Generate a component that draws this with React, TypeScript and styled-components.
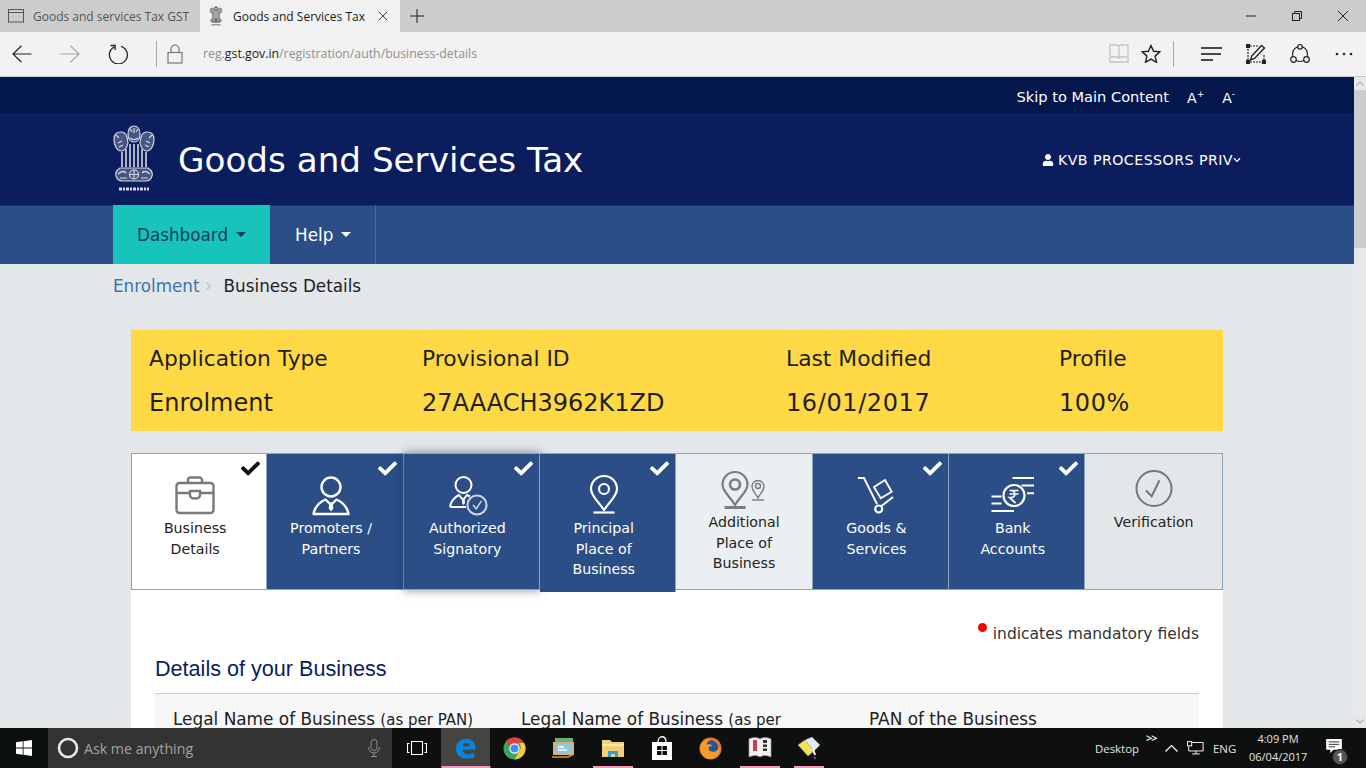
import React from 'react';
import styled, { createGlobalStyle } from 'styled-components';
import { FaCheck, FaUser, FaChevronDown } from 'react-icons/fa';

const GlobalStyle = createGlobalStyle`
  html, body {
    margin: 0;
    padding: 0;
    overflow: hidden;
    background: #000;
  }
  * {
    box-sizing: border-box;
  }
`;

const Screen = styled.div`
  width: 1366px;
  height: 768px;
  display: flex;
  flex-direction: column;
  overflow: hidden;
  font-family: 'DejaVu Sans', Verdana, sans-serif;
`;

/* browser chrome */
const TabStrip = styled.div`
  height: 32px;
  flex: none;
  display: flex;
  align-items: stretch;
  background: #cccccc;
  font-family: 'Open Sans', 'Noto Sans', sans-serif;
  font-size: 12px;
`;
const BrowserTab = styled.div<{ $active?: boolean }>`
  width: 200px;
  display: flex;
  align-items: center;
  gap: 9px;
  padding-left: 8px;
  color: ${(p) => (p.$active ? '#1a1a1a' : '#555')};
  background: ${(p) => (p.$active ? '#f2f2f2' : '#cccccc')};
  white-space: nowrap;
`;
const TabClose = styled.span`
  margin-left: 3px;
  display: flex;
`;
const NewTab = styled.div`
  width: 34px;
  display: flex;
  align-items: center;
  justify-content: center;
`;
const WindowControls = styled.div`
  margin-left: auto;
  display: flex;
`;
const WindowButton = styled.div`
  width: 46px;
  display: flex;
  align-items: center;
  justify-content: center;
`;
const AddressBar = styled.div`
  height: 45px;
  flex: none;
  display: flex;
  align-items: center;
  background: #f2f2f2;
  border-bottom: 1px solid #c9c9c9;
  padding-bottom: 1px;
`;
const ToolSlot = styled.div<{ $w: number }>`
  width: ${(p) => p.$w}px;
  height: 32px;
  flex: none;
  display: flex;
  align-items: center;
  justify-content: center;
`;
const ToolDivider = styled.div<{ $ml: number; $mr?: number }>`
  width: 1px;
  height: 26px;
  flex: none;
  background: #a9a9a9;
  margin-left: ${(p) => p.$ml}px;
  margin-right: ${(p) => p.$mr ?? 0}px;
`;
const Url = styled.div`
  margin-left: 10px;
  flex: 1;
  font-family: 'Open Sans', 'Noto Sans', sans-serif;
  font-size: 12.3px;
  color: #8e8e8e;
  b {
    font-weight: 400;
    color: #1c1c1c;
  }
`;

/* page */
const Viewport = styled.div`
  flex: 1;
  min-height: 0;
  display: flex;
  overflow: hidden;
`;
const Page = styled.div`
  flex: 1;
  min-width: 0;
  background: #e4e7ea;
  overflow: hidden;
`;
const Scrollbar = styled.div`
  width: 12px;
  flex: none;
  display: flex;
  flex-direction: column;
  align-items: stretch;
  background: #e8e8e8;
`;
const ScrollArrow = styled.div`
  height: 13px;
  display: flex;
  align-items: center;
  justify-content: center;
`;
const ScrollThumb = styled.div`
  height: 158px;
  background: #cdcdcd;
`;
const ScrollTrack = styled.div`
  flex: 1;
  display: flex;
  flex-direction: column;
`;
const TopBar = styled.div`
  height: 36px;
  background: #04174d;
  display: flex;
  align-items: center;
  justify-content: flex-end;
  padding: 2px 119px 0 0;
  color: #fff;
  font-size: 14.6px;
`;
const FontSizer = styled.span`
  margin: 3px 0 0 18px;
  font-size: 14px;
  sup {
    font-size: 9px;
    line-height: 0;
  }
`;
const Header = styled.div`
  height: 92px;
  background: #0b1d5c;
`;
const Container = styled.div`
  width: 1128px;
  margin: 0 auto;
`;
const HeaderInner = styled(Container)`
  height: 100%;
  display: flex;
  align-items: center;
  color: #fff;
`;
const EmblemSlot = styled.div`
  width: 65px;
  flex: none;
  display: flex;
  color: #d5d8e2;
`;
const SiteTitle = styled.h1`
  margin: 0;
  padding-top: 2px;
  flex: 1;
  font-size: 34.2px;
  font-weight: 400;
  line-height: 1;
  white-space: nowrap;
`;
const UserMenu = styled.div`
  display: flex;
  align-items: center;
  padding-top: 2px;
  font-size: 14.2px;
  letter-spacing: 0.45px;
  white-space: nowrap;
  svg:first-child {
    margin-right: 4px;
  }
`;
const NavBar = styled.div`
  height: 59px;
  background: #2c4e86;
  box-shadow: inset 0 1px 0 #1b3168;
`;
const NavInner = styled(Container)`
  height: 100%;
  display: flex;
`;
const NavItem = styled.div<{ $active?: boolean }>`
  display: flex;
  align-items: center;
  gap: 8px;
  padding: 0 24px;
  font-size: 16.8px;
  color: ${(p) => (p.$active ? '#0d3b5e' : '#fff')};
  background: ${(p) => (p.$active ? '#17c4bb' : 'transparent')};
  border-right: 1px solid ${(p) => (p.$active ? '#2c4e86' : '#48689a')};
`;
const Caret = styled.span`
  width: 0;
  height: 0;
  border-left: 5px solid transparent;
  border-right: 5px solid transparent;
  border-top: 5px solid currentColor;
`;
const Breadcrumb = styled.div`
  height: 66px;
  padding-top: 11px;
  display: flex;
  font-size: 16.8px;
  line-height: 22px;
  color: #222;
`;
const CrumbLink = styled.span`
  color: #3b74ad;
`;
const CrumbSep = styled.span`
  width: 24px;
  padding-left: 5px;
  color: #c6c6c6;
  font-size: 20px;
  line-height: 20px;
`;
const Content = styled.div`
  padding: 0 18px;
`;
const SummaryPanel = styled.div`
  display: grid;
  grid-template-columns: 3fr 4fr 3fr 2fr;
  height: 101px;
  padding-top: 7px;
  background: #ffd945;
  color: #1f1f1f;
  font-size: 21.8px;
  line-height: 44px;
`;
const SummaryCol = styled.div`
  padding-left: 18px;
  white-space: nowrap;
`;
const SummaryValue = styled.div<{ $spaced?: boolean }>`
  font-size: 24px;
  letter-spacing: ${(p) => (p.$spaced ? '0.6px' : '0')};
`;
const Steps = styled.div`
  margin-top: 22px;
  display: grid;
  grid-template-columns: repeat(7, 136.35px) 1fr;
  height: 137px;
`;
const Step = styled.div<{ $kind: 'current' | 'done' | 'additional' | 'pending'; $lifted?: boolean; $tall?: boolean }>`
  position: relative;
  display: flex;
  flex-direction: column;
  align-items: center;
  text-align: center;
  font-size: 14.2px;
  line-height: 20.5px;
  padding: ${(p) => (p.$kind === 'done' || p.$kind === 'current' ? '20px 8px 0 0' : '14px 0 0 0')};
  background: ${(p) =>
    p.$kind === 'current' ? '#fff' : p.$kind === 'done' ? '#2c4e86' : p.$kind === 'additional' ? '#eaeff2' : '#e4e7ea'};
  color: ${(p) => (p.$kind === 'done' ? '#fff' : '#222')};
  border: 1px solid #8aa5ba;
  border-left: 0;
  border-bottom: ${(p) => (p.$tall ? '0' : '1px solid #8aa5ba')};
  margin-bottom: ${(p) => (p.$tall ? '-2px' : '0')};
  z-index: ${(p) => (p.$lifted || p.$tall ? 1 : 0)};
  box-shadow: ${(p) => (p.$lifted ? '0 0 9px rgba(20, 40, 80, 0.55)' : 'none')};
  &:first-child {
    border-left: 1px solid #8aa5ba;
  }
`;
const StepTick = styled.span<{ $dark?: boolean }>`
  position: absolute;
  top: 5px;
  right: 6px;
  display: flex;
  color: ${(p) => (p.$dark ? '#111' : '#fff')};
`;
const StepIcon = styled.div`
  height: 44px;
  display: flex;
`;
const Card = styled.div`
  background: #fff;
  padding: 32px 24px 0;
`;
const MandatoryNote = styled.div`
  display: flex;
  justify-content: flex-end;
  font-size: 15.5px;
  line-height: 24px;
  color: #333;
`;
const RedDot = styled.span`
  width: 9px;
  height: 9px;
  margin: 1px 6px 0 0;
  border-radius: 50%;
  background: #f00;
`;
const SectionTitle = styled.h2`
  margin: 8px 0 0;
  padding-bottom: 9px;
  border-bottom: 1px solid #ccc;
  font-family: 'Liberation Sans', Arial, sans-serif;
  font-size: 21.6px;
  font-weight: 400;
  line-height: 30px;
  color: #0b1d5c;
`;
const FieldRow = styled.div`
  display: grid;
  grid-template-columns: repeat(3, 1fr);
  background: #f7f7f7;
  padding-top: 13px;
  height: 60px;
`;
const FieldLabel = styled.div`
  padding-left: 18px;
  font-size: 16.9px;
  line-height: 24px;
  color: #222;
  small {
    font-size: 15px;
  }
`;

/* windows taskbar */
const Taskbar = styled.div`
  height: 40px;
  flex: none;
  display: flex;
  align-items: stretch;
  background: #0e0f0f;
  color: #fff;
  font-family: 'Open Sans', 'Noto Sans', sans-serif;
`;
const StartButton = styled.div`
  width: 48px;
  display: flex;
  align-items: center;
  justify-content: center;
  background: #0a100d;
`;
const SearchBox = styled.div`
  width: 344px;
  display: flex;
  align-items: center;
  padding: 0 12px 0 9px;
  background: #333;
  color: #a2a2a2;
  font-size: 14.2px;
`;
const SearchText = styled.span`
  margin-left: 5px;
  flex: 1;
`;
const TaskSlot = styled.div<{ $w?: number; $active?: boolean; $bar?: number }>`
  position: relative;
  width: ${(p) => p.$w ?? 49}px;
  flex: none;
  display: flex;
  align-items: center;
  justify-content: center;
  background: ${(p) => (p.$active ? '#45443f' : 'transparent')};
  &::after {
    content: '';
    display: ${(p) => (p.$bar ? 'block' : 'none')};
    position: absolute;
    bottom: 0;
    left: 50%;
    width: ${(p) => p.$bar}px;
    height: 2px;
    transform: translateX(-50%);
    background: #f29ac2;
  }
`;
const Tray = styled.div`
  margin-left: auto;
  display: flex;
  align-items: center;
  font-size: 11.4px;
  color: #e4e4e4;
`;
const DesktopLabel = styled.span`
  width: 51px;
`;
const Overflow = styled.span`
  width: 13px;
  align-self: flex-start;
  margin-top: 1px;
  font-size: 11px;
  font-weight: 700;
  line-height: 18px;
  letter-spacing: -1px;
`;
const TrayIcon = styled.div<{ $w: number }>`
  width: ${(p) => p.$w}px;
  display: flex;
  justify-content: center;
`;
const Lang = styled.span`
  width: 42px;
  padding-left: 6px;
`;
const Clock = styled.div`
  width: 58px;
  text-align: center;
  font-size: 11px;
  line-height: 18.5px;
`;
const NotifySlot = styled.div`
  position: relative;
  width: 59px;
  height: 100%;
  padding: 0 6px 5px 0;
  display: flex;
  align-items: center;
  justify-content: center;
`;
const NotifyBadge = styled.span`
  position: absolute;
  top: 21px;
  left: 25px;
  width: 16px;
  height: 16px;
  border-radius: 50%;
  background: #555;
  border: 1px solid #222;
  font-size: 11px;
  font-weight: 700;
  line-height: 14px;
  text-align: center;
  color: #fff;
`;

type LineProps = { c?: string };

const Emblem = ({ w, h }: { w: number; h: number }) => (
  <svg width={w} height={h} viewBox="0 0 42 68" fill="none" stroke="currentColor" strokeWidth="1.200">
    <path d="M15 9c0-5 2.500-8 6-8s6 3 6 8-2.500 8-6 8-6-3-6-8z" fill="currentColor" fillOpacity=".3" />
    <path d="M1 14c0-5 3-7 7-7 3 0 5 2 6 5l1 6c-1 5-4 8-7 8-4 0-7-6-7-12z" fill="currentColor" fillOpacity=".3" />
    <path d="M41 14c0-5-3-7-7-7-3 0-5 2-6 5l-1 6c1 5 4 8 7 8 4 0 7-6 7-12z" fill="currentColor" fillOpacity=".3" />
    <path d="M17 4l2 3M25 4l-2 3M21 3v5M17 13c2 2 6 2 8 0M3 10l3 3M5 18l4-2M6 22l4-2M39 10l-3 3M37 18l-4-2M36 22l-4-2" />
    <path d="M9 27v15M13 24v18M17 19v23M21 19v23M25 19v23M29 24v18M33 27v15" strokeWidth="1.600" />
    <path d="M7 43c-3 2-5 5-4 8s3 5 6 5h24c3 0 5-2 6-5s-1-6-4-8z" fill="currentColor" fillOpacity=".3" />
    <circle cx="21" cy="49.500" r="4.500" />
    <path d="M21 45v9M16.500 49.500h9M5 49c3-3 6-3 8-1M37 49c-3-3-6-3-8-1M7 53h7M28 53h7M11 46l2 2M31 46l-2 2" />
    <path d="M6 64h30" strokeWidth="3" strokeDasharray="3 1 2 1" />
  </svg>
);

const BriefcaseIcon = () => (
  <svg width="48" height="44" viewBox="0 0 48 44" fill="none" stroke="#7a7a7a" strokeWidth="2.400">
    <rect x="5.500" y="9" width="37" height="30" rx="3" />
    <path d="M17 9V6a2.500 2.500 0 0 1 2.500-2.500h9A2.500 2.500 0 0 1 31 6v3M5.500 19H19M29 19h13.500" />
    <path d="M19 17h10v4c0 2-2 3.500-5 3.500S19 23 19 21z" />
  </svg>
);
const PersonIcon = () => (
  <svg width="48" height="44" viewBox="0 0 48 44" fill="none" stroke="#fff" strokeWidth="2.400">
    <circle cx="24" cy="13" r="9.500" />
    <path d="M6.500 40C8 32 13 28 18.500 25.500L24 31l5.500-5.500C35 28 40 32 41.500 40z" strokeLinejoin="round" />
    <path d="M22.500 28.500h3l.8 6-2.300 3-2.300-3z" fill="#fff" stroke="none" />
  </svg>
);
const SignatoryIcon = () => (
  <svg width="48" height="44" viewBox="0 0 48 44" fill="none" stroke="#fff" strokeWidth="2">
    <circle cx="20.500" cy="11" r="8" />
    <path d="M7 33c1-6 5-10 9-12l4 5 4-5 3 1.500M7 33h16" strokeLinejoin="round" />
    <path d="M19.500 24h2l.5 5-1.500 2-1.500-2z" fill="#fff" stroke="none" />
    <circle cx="34" cy="31" r="9.500" stroke="#cfd6e4" fill="#2c4e86" />
    <path d="M30 31l3.200 3.800 5.300-8" strokeWidth="1.500" stroke="#cfd6e4" />
  </svg>
);
const PinIcon = () => (
  <svg width="48" height="44" viewBox="0 0 48 44" fill="none" stroke="#fff" strokeWidth="2.200">
    <path d="M24 36C18 27 11 22 11 15a13 13 0 0 1 26 0c0 7-7 12-13 21z" strokeLinejoin="round" />
    <circle cx="24" cy="15" r="5" />
    <path d="M13.500 38.500h21" />
  </svg>
);
const TwoPinsIcon = () => (
  <svg width="48" height="44" viewBox="0 0 48 44" fill="none" stroke="#7c7c7c" strokeWidth="2.200">
    <path d="M15 37C10 28 2.500 24 2.500 16.500a12.500 12.500 0 0 1 25 0C27.500 24 20 28 15 37z" strokeLinejoin="round" />
    <circle cx="15" cy="16.500" r="5" strokeWidth="2.600" />
    <path d="M4.500 39.500h21" strokeWidth="3" />
    <path d="M38 30c-2.500-5-6-7-6-11.500a6 6 0 0 1 12 0C44 23 40.500 25 38 30z" strokeWidth="1.400" />
    <circle cx="38" cy="18" r="2.500" strokeWidth="1.400" />
    <path d="M32 32h12" strokeWidth="1.400" />
  </svg>
);
const TrolleyIcon = () => (
  <svg width="48" height="44" viewBox="0 0 48 44" fill="none" stroke="#fff" strokeWidth="1.900">
    <path d="M6 4h6l13 26" />
    <circle cx="26.700" cy="35" r="3.500" strokeWidth="2.200" />
    <path d="M29.500 32L41 23" />
    <path d="M22 13l11-7 6.700 11.700-11 6.600z" />
  </svg>
);
const MoneyIcon = () => (
  <svg width="48" height="44" viewBox="0 0 48 44" fill="none" stroke="#fff" strokeWidth="2">
    <circle cx="25" cy="21.500" r="10.500" strokeWidth="2.200" />
    <path d="M23.500 4H45M32.500 11.500H45M38 19.300H45M2.500 22.500h10M2.500 29.500h10M2.500 37H25" />
    <path d="M20.500 16.500h9M20.500 20h9M22 16.500c5 0 5 7 0 7h-1.500l6 5.500" strokeWidth="1.700" />
  </svg>
);
const VerifyIcon = () => (
  <svg width="48" height="44" viewBox="0 0 48 44" fill="none" stroke="#777" strokeWidth="2">
    <circle cx="24" cy="20.500" r="17.500" />
    <path d="M16 22.500l5.700 5.700 7.800-16" />
  </svg>
);
const ArrowIcon = ({ c = '#222', flip }: LineProps & { flip?: boolean }) => (
  <svg width="20" height="18" viewBox="0 0 20 18" fill="none" stroke={c} strokeWidth="1.200" transform={flip ? 'scale(-1 1)' : undefined}>
    <path d="M19.500 9H1M9.500.7L1 9l8.500 8.300" />
  </svg>
);
const ReloadIcon = () => (
  <svg width="20" height="20" viewBox="0 0 20 20" fill="none" stroke="#222" strokeWidth="1.300">
    <path d="M6.500 2.800A9 9 0 1 0 13 2.300" />
    <path d="M2.500 1.500h4.600v4.600" />
  </svg>
);
const LockIcon = () => (
  <svg width="16" height="20" viewBox="0 0 16 20" fill="none" stroke="#777" strokeWidth="1.200">
    <rect x="1" y="8.500" width="14" height="10.500" />
    <path d="M4 8.500V5a4 4 0 0 1 8 0v3.500" />
  </svg>
);
const BookIcon = () => (
  <svg width="20" height="19" viewBox="0 0 20 19" fill="none" stroke="#c4c4c4" strokeWidth="1.300">
    <path d="M1 1h7c1 0 2 .6 2 2v12c0-1-1-2-2-2H1zM19 1h-7c-1 0-2 .6-2 2v12c0-1 1-2 2-2h7zM1 13v5h18v-5" />
  </svg>
);
const StarIcon = () => (
  <svg width="20" height="19" viewBox="0 0 20 19" fill="none" stroke="#222" strokeWidth="1.400">
    <path d="M10 1.500l2.600 5.800 6.300.6-4.800 4.200 1.400 6.200L10 15.100l-5.500 3.200 1.400-6.200L1.100 7.900l6.300-.6z" />
  </svg>
);
const HubIcon = () => (
  <svg width="21" height="14" viewBox="0 0 21 14" fill="none" stroke="#111" strokeWidth="1.400">
    <path d="M0 1h21M0 7h20M0 13h12" />
  </svg>
);
const NoteIcon = () => (
  <svg width="20" height="20" viewBox="0 0 20 20" fill="none" stroke="#222" strokeWidth="1.200">
    <path d="M4 2h8M2 5v11M4 18h12M18 11v5" strokeDasharray="2 1" />
    <rect x=".5" y=".5" width="3" height="3" fill="#222" />
    <rect x=".5" y="16.500" width="3" height="3" fill="#222" />
    <rect x="16.500" y="16.500" width="3" height="3" fill="#222" />
    <path d="M15.500 1.500l3 2.500L8.500 14.500l-4 1.500 1.200-4z" strokeWidth="1.400" />
  </svg>
);
const ShareIcon = () => (
  <svg width="20" height="20" viewBox="0 0 20 20" fill="none" stroke="#222" strokeWidth="1.200">
    <circle cx="10" cy="10" r="7.500" />
    <circle cx="10" cy="2.800" r="2.300" fill="#f2f2f2" />
    <circle cx="3.500" cy="15.500" r="2.800" fill="#f2f2f2" />
    <circle cx="16.500" cy="15.500" r="2.800" fill="#f2f2f2" />
  </svg>
);
const MoreIcon = () => (
  <svg width="18" height="4" viewBox="0 0 18 4" fill="#222">
    <circle cx="2" cy="2" r="1.300" />
    <circle cx="9" cy="2" r="1.300" />
    <circle cx="16" cy="2" r="1.300" />
  </svg>
);
const PageTabIcon = () => (
  <svg width="16" height="14" viewBox="0 0 16 14" fill="none" stroke="#555" strokeWidth="1">
    <rect x=".5" y=".5" width="15" height="12.500" />
    <path d="M.5 3.500h15" />
  </svg>
);
const Thin = ({ d, size = 14 }: { d: string; size?: number }) => (
  <svg width={size} height={size} viewBox="0 0 14 14" fill="none" stroke="#222" strokeWidth="1">
    <path d={d} />
  </svg>
);
const RestoreIcon = () => (
  <svg width="10" height="10" viewBox="0 0 10 10" fill="none" stroke="#222" strokeWidth="1">
    <rect x=".5" y="2.500" width="7" height="7" />
    <path d="M2.500 2.500v-2h7v7h-2" />
  </svg>
);
const WindowsIcon = () => (
  <svg width="16" height="16" viewBox="0 0 16 16" fill="#fff">
    <path d="M0 2.300l6.700-1v6.300H0zM7.500 1.200L16 0v7.600H7.500zM0 8.400h6.700v6.300L0 13.700zM7.500 8.400H16V16l-8.500-1.200z" />
  </svg>
);
const Cortana = () => (
  <svg width="22" height="22" viewBox="0 0 22 22" fill="none" stroke="#e8e8e8" strokeWidth="2.600" style={{ flex: 'none' }}>
    <circle cx="11" cy="11" r="9" />
  </svg>
);
const MicIcon = () => (
  <svg width="12" height="18" viewBox="0 0 12 18" fill="none" stroke="#8d8d8d" strokeWidth="1">
    <rect x="3" y=".5" width="6" height="11" rx="3" />
    <path d="M.5 8c0 8 11 8 11 0M6 14v3.500M3 17.500h6" />
  </svg>
);
const TaskViewIcon = () => (
  <svg width="20" height="14" viewBox="0 0 20 14" fill="none" stroke="#fff" strokeWidth="1.100">
    <rect x="4.500" y=".5" width="11" height="13" />
    <path d="M2.500 2.500H.5v9h2M17.500 2.500h2v9h-2" />
  </svg>
);
const EdgeIcon = () => (
  <svg width="22" height="22" viewBox="0 0 24 24" fill="#0c83d8" fillRule="evenodd">
    <path d="M1 13C1 5.500 7 1.500 13 2c6.500.5 10 5.500 9.500 12H8.500c0 5 7 6.500 12.500 3v5c-8 3.500-20 1.500-20-9zM8.500 10H16c0-4.500-7-4.500-7.500 0z" />
  </svg>
);
const ChromeIcon = () => (
  <svg width="23" height="23" viewBox="0 0 24 24">
    <circle cx="12" cy="12" r="11.500" fill="#3aa757" />
    <path d="M12 .5a11.500 11.500 0 0 1 10 5.800H12a5.700 5.700 0 0 0-5.200 3.300L3 4.200A11.500 11.500 0 0 1 12 .5z" fill="#db4437" />
    <path d="M22 6.300A11.500 11.500 0 0 1 12 23.500l4.800-8.500A5.700 5.700 0 0 0 16.500 6.300z" fill="#fcc934" />
    <circle cx="12" cy="12" r="5.400" fill="#fff" />
    <circle cx="12" cy="12" r="4.200" fill="#4a8af4" />
  </svg>
);
const MailIcon = () => (
  <svg width="24" height="22" viewBox="0 0 24 22">
    <rect x="3" y="1" width="18" height="15" fill="#69b27a" />
    <rect x="1" y="5" width="21" height="13" fill="#d8b070" />
    <rect x="3" y="7" width="17" height="10" fill="#8fc6e8" />
    <path d="M6 10h6M6 13h9" stroke="#fff" strokeWidth="1.500" />
    <path d="M0 20h16l6-3" stroke="#d89a30" strokeWidth="1.500" fill="none" />
  </svg>
);
const FolderIcon = () => (
  <svg width="22" height="19" viewBox="0 0 22 19">
    <path d="M0 1h8l2 2h12v15H0z" fill="#f3d078" />
    <path d="M0 5h22v2H0z" fill="#fbe7a8" />
    <path d="M6 18v-6h10v6h-3v-3H9v3z" fill="#3a9ad9" />
  </svg>
);
const StoreIcon = () => (
  <svg width="22" height="24" viewBox="0 0 22 24" fill="#fff">
    <path d="M1 6h20v18H1z" />
    <path d="M7 6c0-7 8-7 8 0" fill="none" stroke="#fff" strokeWidth="1.300" />
    <path d="M6 10h4.500v4H6zM11.500 10H16v4h-4.500zM6 15h4.500v4H6zM11.500 15H16v4h-4.500z" fill="#0e0f0f" />
  </svg>
);
const FirefoxIcon = () => (
  <svg width="23" height="23" viewBox="0 0 24 24">
    <circle cx="12" cy="12" r="11.500" fill="#e8762c" />
    <circle cx="12.500" cy="11" r="7.500" fill="#27549b" />
    <path d="M2 8c3-5 7-6 10-5-3 1-4 3-4 5 2-1 5 0 6 1-2 0-4 1-4 3 0 3 4 4 7 3 2-.5 4-3 4-6 2 5-1 14-10 14C5 23 0 15 2 8z" fill="#f49b2c" />
  </svg>
);
const DictionaryIcon = () => (
  <svg width="24" height="24" viewBox="0 0 24 24">
    <path d="M1 3c4-2 8-2 11 0 3-2 7-2 11 0v18c-4-2-8-2-11 0-3-2-7-2-11 0z" fill="#f2f2f2" stroke="#999" strokeWidth=".7" />
    <path d="M5 4h4v11H5z" fill="#c8414b" />
    <path d="M15 4h4v3h-4zM15 8.500h4v2.500h-4zM15 12.500h4V15h-4z" fill="#333" />
  </svg>
);
const PatchIcon = () => (
  <svg width="24" height="24" viewBox="0 0 24 24">
    <path d="M1 9l7-5 9 11-6 5z" fill="#f0e060" stroke="#aaa24a" strokeWidth=".6" />
    <path d="M8 4l7-3 8 8-6 6z" fill="#dfe9f2" />
    <path d="M16 13l2 6" stroke="#fff" strokeWidth="2" />
    <path d="M17 21l1.500 2" stroke="#c23bb3" strokeWidth="1.500" />
  </svg>
);
const NetworkIcon = () => (
  <svg width="17" height="14" viewBox="0 0 20 16" fill="none" stroke="#fff" strokeWidth="1.100">
    <path d="M6 1.500h13v10H2V6M10.500 11.500V15M6 15h9" />
    <rect x=".5" y=".5" width="5" height="5" />
  </svg>
);
const ChevronUp = () => (
  <svg width="13" height="8" viewBox="0 0 13 8" fill="none" stroke="#fff" strokeWidth="1.200">
    <path d="M.5 7.500l6-6 6 6" />
  </svg>
);
const MessageIcon = () => (
  <svg width="16" height="14" viewBox="0 0 19 17" fill="#fff">
    <path d="M0 0h19v13H9l-4 4v-4H0z" />
    <path d="M3 3.500h13M3 6.500h13M3 9.500h8" stroke="#0e0f0f" strokeWidth="1" />
  </svg>
);
const ScrollChevron = ({ down }: { down?: boolean }) => (
  <svg width="8" height="5" viewBox="0 0 8 5" fill="none" stroke="#b0b0b0" strokeWidth="1.200">
    <path d={down ? 'M.5.500L4 4l3.500-3.500' : 'M.5 4.500L4 1l3.500 3.500'} />
  </svg>
);

type StepData = {
  lines: string[];
  icon: React.ReactNode;
  kind: 'current' | 'done' | 'additional' | 'pending';
  lifted?: boolean;
  tall?: boolean;
};

const steps: StepData[] = [
  { lines: ['Business', 'Details'], icon: <BriefcaseIcon />, kind: 'current' },
  { lines: ['Promoters /', 'Partners'], icon: <PersonIcon />, kind: 'done' },
  { lines: ['Authorized', 'Signatory'], icon: <SignatoryIcon />, kind: 'done', lifted: true },
  { lines: ['Principal', 'Place of', 'Business'], icon: <PinIcon />, kind: 'done', tall: true },
  { lines: ['Additional', 'Place of', 'Business'], icon: <TwoPinsIcon />, kind: 'additional' },
  { lines: ['Goods &', 'Services'], icon: <TrolleyIcon />, kind: 'done' },
  { lines: ['Bank', 'Accounts'], icon: <MoneyIcon />, kind: 'done' },
  { lines: ['Verification'], icon: <VerifyIcon />, kind: 'pending' },
];

const summary = [
  { label: 'Application Type', value: 'Enrolment' },
  { label: 'Provisional ID', value: '27AAACH3962K1ZD' },
  { label: 'Last Modified', value: '16/01/2017', spaced: true },
  { label: 'Profile', value: '100%', spaced: true },
];

const App = () => (
  <Screen>
    <GlobalStyle />
    <TabStrip>
      <BrowserTab>
        <PageTabIcon />
        Goods and services Tax GST
      </BrowserTab>
      <BrowserTab $active>
        <Emblem w={16} h={20} />
        Goods and Services Tax
        <TabClose>
          <Thin d="M2 2l10 10M12 2L2 12" size={12} />
        </TabClose>
      </BrowserTab>
      <NewTab>
        <Thin d="M7 0v14M0 7h14" />
      </NewTab>
      <WindowControls>
        <WindowButton>
          <Thin d="M2 7h10" />
        </WindowButton>
        <WindowButton>
          <RestoreIcon />
        </WindowButton>
        <WindowButton>
          <Thin d="M2 2l10 10M12 2L2 12" />
        </WindowButton>
      </WindowControls>
    </TabStrip>
    <AddressBar>
      <ToolSlot $w={44}>
        <ArrowIcon />
      </ToolSlot>
      <ToolSlot $w={52}>
        <ArrowIcon c="#a8a8a8" flip />
      </ToolSlot>
      <ToolSlot $w={44}>
        <ReloadIcon />
      </ToolSlot>
      <ToolDivider $ml={16} />
      <ToolSlot $w={36}>
        <LockIcon />
      </ToolSlot>
      <Url>
        reg.<b>gst.gov.in</b>/registration/auth/business-details
      </Url>
      <ToolSlot $w={32}>
        <BookIcon />
      </ToolSlot>
      <ToolSlot $w={32}>
        <StarIcon />
      </ToolSlot>
      <ToolDivider $ml={6} $mr={16} />
      <ToolSlot $w={43}>
        <HubIcon />
      </ToolSlot>
      <ToolSlot $w={45}>
        <NoteIcon />
      </ToolSlot>
      <ToolSlot $w={44}>
        <ShareIcon />
      </ToolSlot>
      <ToolSlot $w={44}>
        <MoreIcon />
      </ToolSlot>
    </AddressBar>
    <Viewport>
      <Page>
        <TopBar>
          <span>Skip to Main Content</span>
          <FontSizer>
            A<sup>+</sup>
          </FontSizer>
          <FontSizer>
            A<sup>-</sup>
          </FontSizer>
        </TopBar>
        <Header>
          <HeaderInner>
            <EmblemSlot>
              <Emblem w={42} h={68} />
            </EmblemSlot>
            <SiteTitle>Goods and Services Tax</SiteTitle>
            <UserMenu>
              <FaUser size={12} />
              KVB PROCESSORS PRIV
              <FaChevronDown size={8} />
            </UserMenu>
          </HeaderInner>
        </Header>
        <NavBar>
          <NavInner>
            <NavItem $active>
              Dashboard <Caret />
            </NavItem>
            <NavItem>
              Help <Caret />
            </NavItem>
          </NavInner>
        </NavBar>
        <Container>
          <Breadcrumb>
            <CrumbLink>Enrolment</CrumbLink>
            <CrumbSep>›</CrumbSep>
            Business Details
          </Breadcrumb>
          <Content>
            <SummaryPanel>
              {summary.map((item) => (
                <SummaryCol key={item.label}>
                  {item.label}
                  <SummaryValue $spaced={item.spaced}>{item.value}</SummaryValue>
                </SummaryCol>
              ))}
            </SummaryPanel>
            <Steps>
              {steps.map((step) => (
                <Step key={step.lines.join(' ')} $kind={step.kind} $lifted={step.lifted} $tall={step.tall}>
                  {(step.kind === 'done' || step.kind === 'current') && (
                    <StepTick $dark={step.kind === 'current'}>
                      <FaCheck size={19} />
                    </StepTick>
                  )}
                  <StepIcon>{step.icon}</StepIcon>
                  {step.lines.map((line) => (
                    <div key={line}>{line}</div>
                  ))}
                </Step>
              ))}
            </Steps>
            <Card>
              <MandatoryNote>
                <RedDot />
                indicates mandatory fields
              </MandatoryNote>
              <SectionTitle>Details of your Business</SectionTitle>
              <FieldRow>
                <FieldLabel>
                  Legal Name of Business <small>(as per PAN)</small>
                </FieldLabel>
                <FieldLabel>
                  Legal Name of Business <small>(as per</small>
                </FieldLabel>
                <FieldLabel>PAN of the Business</FieldLabel>
              </FieldRow>
            </Card>
          </Content>
        </Container>
      </Page>
      <Scrollbar>
        <ScrollArrow>
          <ScrollChevron />
        </ScrollArrow>
        <ScrollTrack>
          <ScrollThumb />
        </ScrollTrack>
        <ScrollArrow>
          <ScrollChevron down />
        </ScrollArrow>
      </Scrollbar>
    </Viewport>
    <Taskbar>
      <StartButton>
        <WindowsIcon />
      </StartButton>
      <SearchBox>
        <Cortana />
        <SearchText>Ask me anything</SearchText>
        <MicIcon />
      </SearchBox>
      <TaskSlot>
        <TaskViewIcon />
      </TaskSlot>
      <TaskSlot $active $bar={49}>
        <EdgeIcon />
      </TaskSlot>
      <TaskSlot>
        <ChromeIcon />
      </TaskSlot>
      <TaskSlot>
        <MailIcon />
      </TaskSlot>
      <TaskSlot $bar={40}>
        <FolderIcon />
      </TaskSlot>
      <TaskSlot>
        <StoreIcon />
      </TaskSlot>
      <TaskSlot>
        <FirefoxIcon />
      </TaskSlot>
      <TaskSlot $bar={40}>
        <DictionaryIcon />
      </TaskSlot>
      <TaskSlot $bar={30}>
        <PatchIcon />
      </TaskSlot>
      <Tray>
        <DesktopLabel>Desktop</DesktopLabel>
        <Overflow>{'>>'}</Overflow>
        <TrayIcon $w={24}>
          <ChevronUp />
        </TrayIcon>
        <TrayIcon $w={24}>
          <NetworkIcon />
        </TrayIcon>
        <Lang>ENG</Lang>
        <Clock>
          4:09 PM
          <br />
          06/04/2017
        </Clock>
        <NotifySlot>
          <MessageIcon />
          <NotifyBadge>1</NotifyBadge>
        </NotifySlot>
      </Tray>
    </Taskbar>
  </Screen>
);

export default App;
